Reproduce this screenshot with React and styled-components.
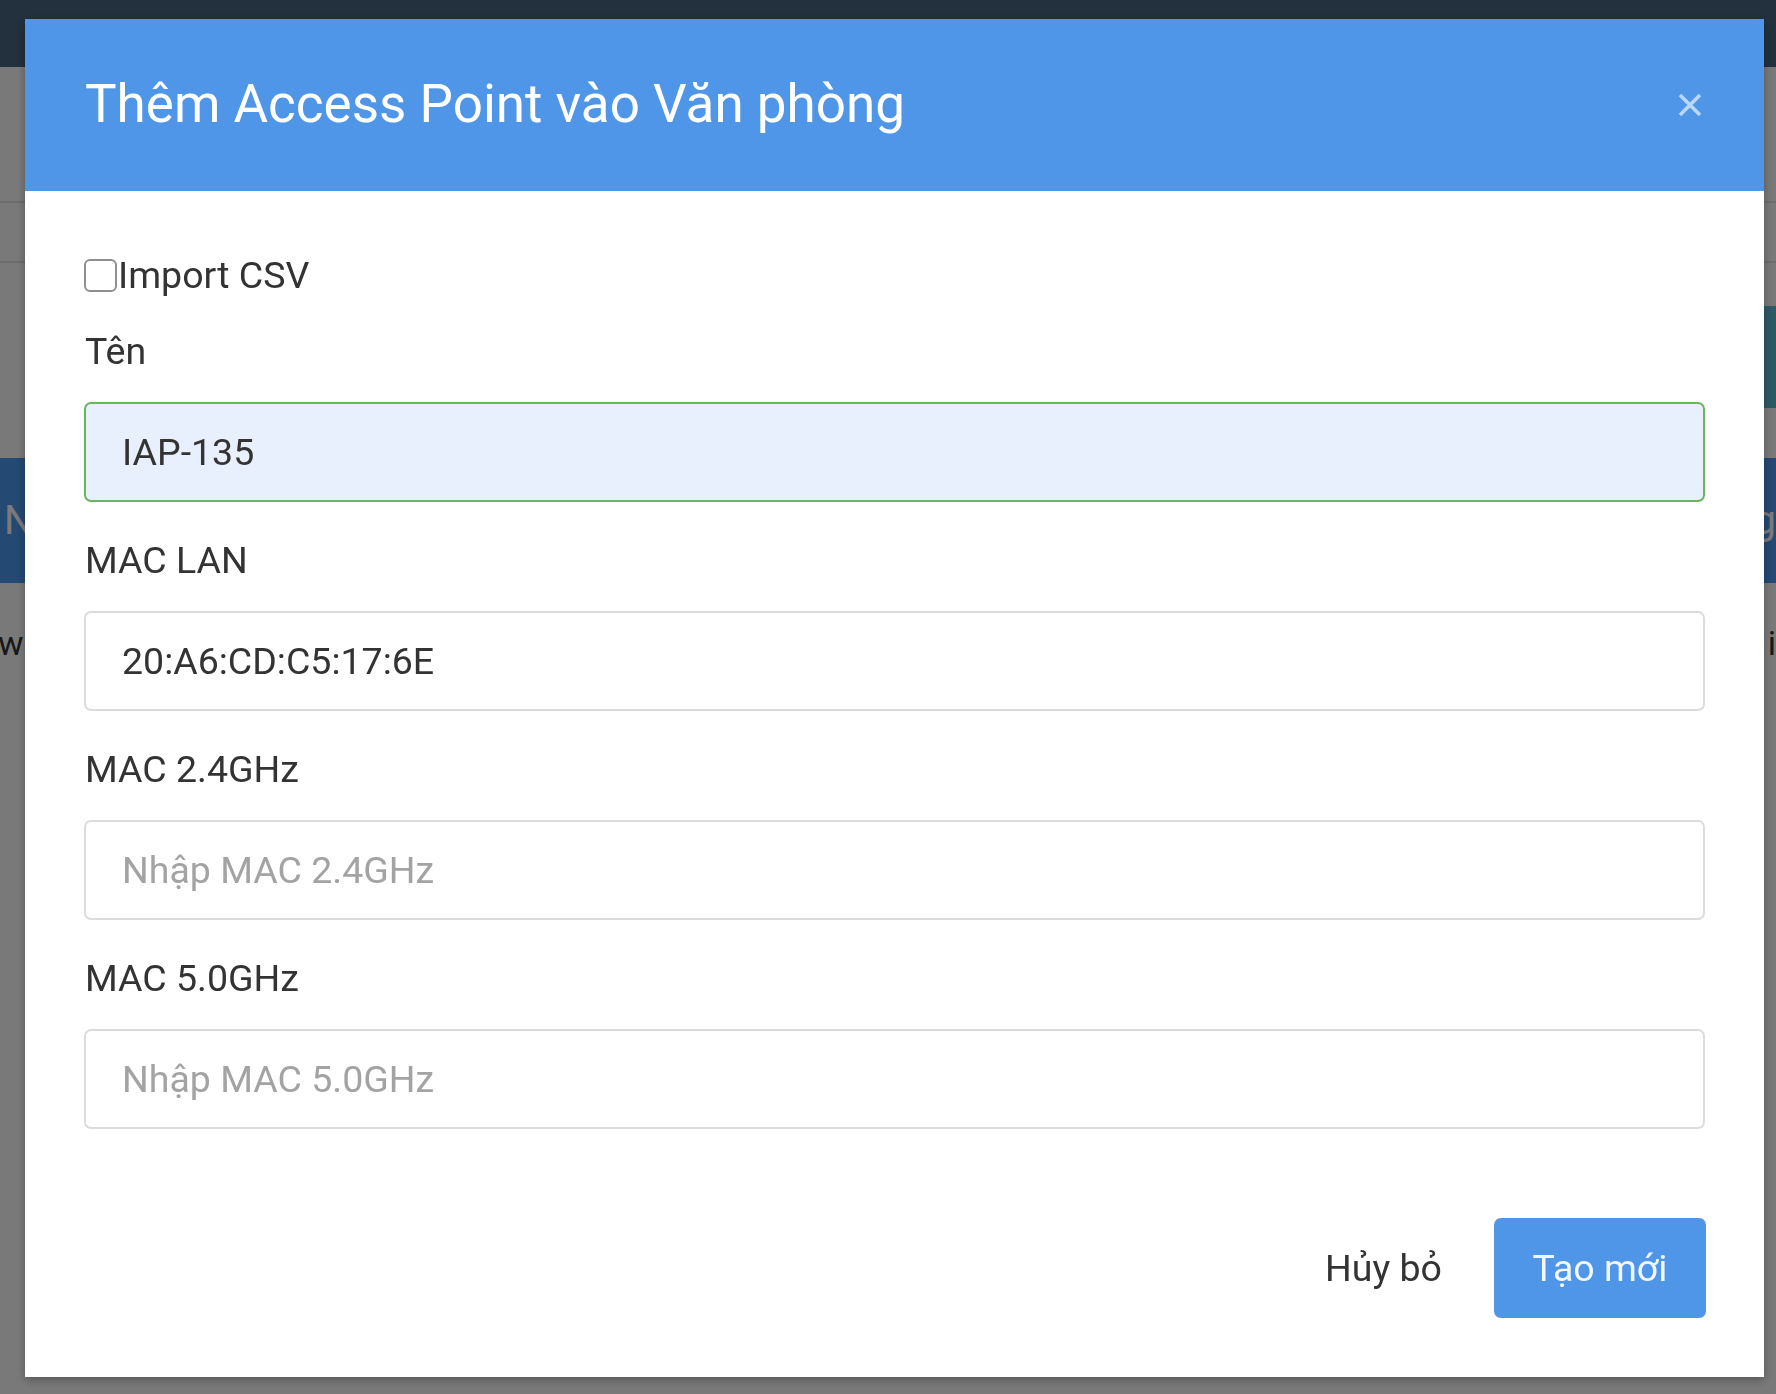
import React, { useState } from "react";
import styled, { createGlobalStyle } from "styled-components";

const GlobalStyle = createGlobalStyle`
  html, body {
    margin: 0;
    padding: 0;
  }
  body {
    font-family: Roboto, "Noto Sans", "Liberation Sans", sans-serif;
    background: #ffffff;
    overflow: hidden;
  }
  * {
    box-sizing: border-box;
  }
`;

const fields = [
  { id: "name", label: "Tên", value: "IAP-135", placeholder: "Nhập tên", autofilled: true },
  { id: "lan", label: "MAC LAN", value: "20:A6:CD:C5:17:6E", placeholder: "Nhập MAC LAN" },
  { id: "mac24", label: "MAC 2.4GHz", value: "", placeholder: "Nhập MAC 2.4GHz" },
  { id: "mac50", label: "MAC 5.0GHz", value: "", placeholder: "Nhập MAC 5.0GHz" },
];

const CloseIcon = () => (
  <svg width="24" height="24" viewBox="0 0 24 24">
    <path
      d="M2 2 L22 22 M22 2 L2 22"
      stroke="currentColor"
      strokeWidth="3.6"
      strokeLinecap="butt"
      fill="none"
    />
  </svg>
);

const App = () => {
  const [values, setValues] = useState(
    fields.reduce((acc, f) => ({ ...acc, [f.id]: f.value }), {})
  );
  const [importCsv, setImportCsv] = useState(false);

  return (
    <>
      <GlobalStyle />
      <StyledPage>
        <StyledNavbar />
        <StyledSubHeader />
        <StyledTabs />
        <StyledActions>
          <StyledInfoButton />
        </StyledActions>
        <StyledTableHead>
          <span>Name</span>
          <span>Hành động</span>
        </StyledTableHead>
        <StyledTableRow>
          <span>wifi-office</span>
          <span>i</span>
        </StyledTableRow>
      </StyledPage>

      <StyledOverlay>
        <StyledModal>
          <StyledHeader>
            <StyledTitle>Thêm Access Point vào Văn phòng</StyledTitle>
            <StyledClose aria-label="close">
              <CloseIcon />
            </StyledClose>
          </StyledHeader>

          <StyledBody>
            <StyledCheckLabel>
              <StyledCheckbox
                type="checkbox"
                checked={importCsv}
                onChange={(e) => setImportCsv(e.target.checked)}
              />
              Import CSV
            </StyledCheckLabel>

            {fields.map((f) => (
              <StyledGroup key={f.id}>
                <StyledLabel htmlFor={f.id}>{f.label}</StyledLabel>
                <StyledInput
                  id={f.id}
                  $autofilled={f.autofilled}
                  value={values[f.id]}
                  placeholder={f.placeholder}
                  onChange={(e) =>
                    setValues({ ...values, [f.id]: e.target.value })
                  }
                />
              </StyledGroup>
            ))}
          </StyledBody>

          <StyledFooter>
            <StyledCancelButton>Hủy bỏ</StyledCancelButton>
            <StyledSubmitButton>Tạo mới</StyledSubmitButton>
          </StyledFooter>
        </StyledModal>
      </StyledOverlay>
    </>
  );
};

export default App;

const StyledPage = styled.div`
  width: 1776px;
  height: 1394px;
  display: flex;
  flex-direction: column;
  background: #fdfdfd;
`;

const StyledNavbar = styled.header`
  height: 67px;
  background: #47667f;
`;

const StyledSubHeader = styled.div`
  height: 136px;
  border-bottom: 2px solid #e4e4e4;
`;

const StyledTabs = styled.div`
  height: 60px;
  border-bottom: 2px solid #e4e4e4;
`;

const StyledActions = styled.div`
  height: 195px;
  display: flex;
  justify-content: flex-end;
  align-items: flex-start;
  padding-top: 43px;
`;

const StyledInfoButton = styled.div`
  width: 40px;
  height: 102px;
  background: #5ebcd4;
`;

const StyledTableHead = styled.div`
  height: 125px;
  background: #4d98f0;
  display: flex;
  align-items: center;
  justify-content: space-between;
  padding: 0 0 0 4px;
  color: #ffffff;
  font-size: 40px;
`;

const StyledTableRow = styled.div`
  height: 120px;
  display: flex;
  align-items: center;
  justify-content: space-between;
  color: #333;
  font-size: 34px;
  span:first-child {
    margin-left: -2px;
  }
`;

const StyledOverlay = styled.div`
  position: fixed;
  inset: 0;
  background: rgba(0, 0, 0, 0.52);
  display: flex;
  align-items: flex-start;
  padding: 19px 0 0 25px;
`;

const StyledModal = styled.div`
  width: 1739px;
  height: 1358px;
  background: #ffffff;
  display: flex;
  flex-direction: column;
  box-shadow: 0 3px 9px rgba(0, 0, 0, 0.3);
`;

const StyledHeader = styled.div`
  height: 172px;
  flex-shrink: 0;
  background: #4f96e8;
  display: flex;
  align-items: center;
  justify-content: space-between;
  padding: 0 62px 0 60px;
`;

const StyledTitle = styled.h4`
  margin: 0;
  font-size: 53px;
  font-weight: 400;
  color: #ffffff;
  line-height: 1.2;
`;

const StyledClose = styled.button`
  border: 0;
  background: none;
  padding: 0;
  display: flex;
  color: rgba(255, 255, 255, 0.62);
  cursor: pointer;
`;

const StyledBody = styled.div`
  padding: 62px 59px 0 59px;
  display: flex;
  flex-direction: column;
`;

const StyledCheckLabel = styled.label`
  display: flex;
  align-items: center;
  height: 44px;
  font-size: 37.5px;
  color: #333333;
  margin: 0 0 32px 0;
`;

const StyledCheckbox = styled.input`
  appearance: none;
  width: 33px;
  height: 33px;
  margin: 0 1px 0 0;
  border: 2px solid #8f8f8f;
  border-radius: 6px;
  background: #ffffff;
`;

const StyledGroup = styled.div`
  display: flex;
  flex-direction: column;
  margin-bottom: 36px;
`;

const StyledLabel = styled.label`
  font-size: 37.5px;
  line-height: 44px;
  color: #333333;
  margin: 0 0 29px 1px;
`;

const StyledInput = styled.input`
  height: 100px;
  width: 100%;
  padding: 0 36px;
  font-family: inherit;
  font-size: 37.5px;
  color: #333333;
  border-radius: 7px;
  border: 2px solid ${(p) => (p.$autofilled ? "#6cb45f" : "#dcdcdc")};
  background: ${(p) => (p.$autofilled ? "#e8f0fd" : "#ffffff")};
  outline: none;

  &::placeholder {
    color: #a3a3a3;
  }
`;

const StyledFooter = styled.div`
  margin-top: auto;
  display: flex;
  justify-content: flex-end;
  align-items: center;
  padding: 0 58px 59px 0;
`;

const StyledCancelButton = styled.button`
  border: 0;
  background: none;
  font-family: inherit;
  font-size: 37.5px;
  color: #333333;
  padding: 0 26px;
  margin-right: 26px;
  height: 100px;
`;

const StyledSubmitButton = styled.button`
  border: 0;
  background: #4f96e8;
  color: #f2f7fe;
  font-family: inherit;
  font-size: 37.5px;
  width: 212px;
  height: 100px;
  border-radius: 7px;
`;
